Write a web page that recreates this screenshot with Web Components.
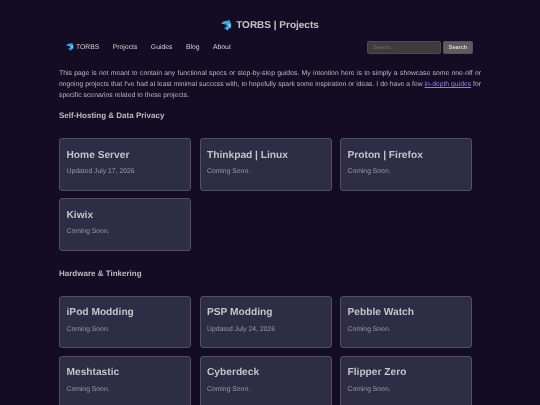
<!DOCTYPE html>
<html lang="en">
<head>
<meta charset="utf-8">
<title>TORBS | Projects</title>
<style>
html, body { margin: 0; background: #140c24; overflow: hidden; height: 405px; }
body { font-family: "Liberation Sans", Arial, sans-serif; color: #c8c8c8; text-rendering: geometricPrecision; filter: blur(.3px); }
</style>
</head>
<body>
<page-title>TORBS | Projects</page-title>
<main-nav></main-nav>
<page-content>
  <intro-text>This page is not meant to contain any functional specs or step-by-step guides. My intention here is to simply a showcase some one-off or ongoing projects that I've had at least minimal success with, to hopefully spark some inspiration or ideas. I do have a few <a href="#">in-depth guides</a> for specific scenarios related to these projects.</intro-text>
  <section-head first>Self-Hosting &amp; Data Privacy</section-head>
  <card-grid>
    <project-card name="Home Server">Updated July 17, 2026</project-card>
    <project-card name="Thinkpad | Linux">Coming Soon.</project-card>
    <project-card name="Proton | Firefox">Coming Soon.</project-card>
    <project-card name="Kiwix">Coming Soon.</project-card>
  </card-grid>
  <section-head>Hardware &amp; Tinkering</section-head>
  <card-grid>
    <project-card name="iPod Modding">Coming Soon.</project-card>
    <project-card name="PSP Modding">Updated July 24, 2026</project-card>
    <project-card name="Pebble Watch">Coming Soon.</project-card>
    <project-card name="Meshtastic">Coming Soon.</project-card>
    <project-card name="Cyberdeck">Coming Soon.</project-card>
    <project-card name="Flipper Zero">Coming Soon.</project-card>
  </card-grid>
</page-content>
<script>
const dolphin = (size) => `
  <svg width="${size}" height="${size}" viewBox="0 0 16 16" aria-hidden="true">
    <path fill="#3ea6de" d="M.5 5C2 2.500 5 1 9 1l4-1v2c2 2 2.500 5 1.500 8l.5 2-2.500-.5c-1 1.500-2.500 2.500-3.500 4L7 13l-3-1c3-1 4.500-2.500 4.500-4.500C6 6 3 6 .5 5z"/>
    <path fill="#a6dcf4" d="M10.500 6c1.200-.3 2.300 0 3 .8-.1 1.700-.6 3-1.500 4-.1-1.800-.6-3.300-1.500-4.800z"/>
  </svg>`;

class PageTitle extends HTMLElement {
  constructor() {
    super();
    this.attachShadow({mode: 'open'}).innerHTML = `
      <style>
        :host { display: flex; justify-content: center; align-items: center; gap: 4px; height: 20px; padding-top: 15px;
          font-size: 10px; font-weight: bold; color: #c4c4c8; }
        svg { display: block; }
      </style>
      ${dolphin(11)}<slot></slot>`;
  }
}
customElements.define('page-title', PageTitle);

class MainNav extends HTMLElement {
  constructor() {
    super();
    this.attachShadow({mode: 'open'}).innerHTML = `
      <style>
        :host { display: flex; align-items: center; justify-content: space-between; box-sizing: border-box;
          width: 414px; height: 14px; margin: 5px 0 0 59px; padding: 0 0 0 7px; font-size: 6.800px; color: #d2d2d2; }
        nav { display: flex; gap: 13.500px; align-items: center; }
        .brand { display: flex; gap: 2px; align-items: center; }
        form { display: flex; gap: 2px; margin: 0; }
        input { box-sizing: border-box; width: 74px; height: 13px; padding: 0 5px; border: 1px solid #4c4c4c; border-radius: 1.500px;
          background: #3c3c3c; font: 5.500px "Liberation Sans", Arial, sans-serif; color: #ccc; outline: 0; }
        input::placeholder { color: #707070; }
        button { box-sizing: border-box; width: 30px; height: 13px; padding: 0; border: 1px solid #555; border-radius: 1.500px;
          background: #5c5c5c; font: bold 5.500px "Liberation Sans", Arial, sans-serif; color: #dcdcdc; }
      </style>
      <nav>
        <span class="brand">${dolphin(8)}TORBS</span>
        <span>Projects</span><span>Guides</span><span>Blog</span><span>About</span>
      </nav>
      <form onsubmit="return false"><input placeholder="Search..."><button>Search</button></form>`;
  }
}
customElements.define('main-nav', MainNav);

class PageContent extends HTMLElement {
  constructor() {
    super();
    this.attachShadow({mode: 'open'}).innerHTML = `
      <style>:host { display: block; width: 422px; margin: 14px 0 0 59px; }</style>
      <slot></slot>`;
  }
}
customElements.define('page-content', PageContent);

class IntroText extends HTMLElement {
  constructor() {
    super();
    this.attachShadow({mode: 'open'}).innerHTML = `
      <style>
        :host { display: block; font-size: 6.800px; line-height: 11px; color: #b8b8c0; text-align: justify; }
        ::slotted(a) { color: #9080e8; }
      </style>
      <slot></slot>`;
  }
}
customElements.define('intro-text', IntroText);

class SectionHead extends HTMLElement {
  constructor() {
    super();
    this.attachShadow({mode: 'open'}).innerHTML = `
      <style>
        :host { display: block; height: 10px; line-height: 10px; margin: 18px 0 17px; font-size: 8px; font-weight: bold; color: #bcbcc2; }
        :host([first]) { margin-top: 10px; }
      </style>
      <slot></slot>`;
  }
}
customElements.define('section-head', SectionHead);

class CardGrid extends HTMLElement {
  constructor() {
    super();
    this.attachShadow({mode: 'open'}).innerHTML = `
      <style>:host { display: grid; width: 413px; grid-template-columns: repeat(3, 1fr); column-gap: 8.500px; row-gap: 7.500px; }</style>
      <slot></slot>`;
  }
}
customElements.define('card-grid', CardGrid);

class ProjectCard extends HTMLElement {
  constructor() {
    super();
    this.attachShadow({mode: 'open'}).innerHTML = `
      <style>
        :host { display: block; box-sizing: border-box; height: 52.500px; padding: 9.500px 6.500px 0; background: #2d2d45;
          border: 1px solid #50505f; border-radius: 3px; }
        h3 { margin: 0; font-size: 10.200px; line-height: 13px; font-weight: bold; color: #c4c4ca; }
        p { margin: 5.500px 0 0; font-size: 6.800px; line-height: 9px; color: #9a9aa5; }
      </style>
      <h3></h3><p><slot></slot></p>`;
    this.shadowRoot.querySelector('h3').textContent = this.getAttribute('name');
  }
}
customElements.define('project-card', ProjectCard);
</script>
</body>
</html>
